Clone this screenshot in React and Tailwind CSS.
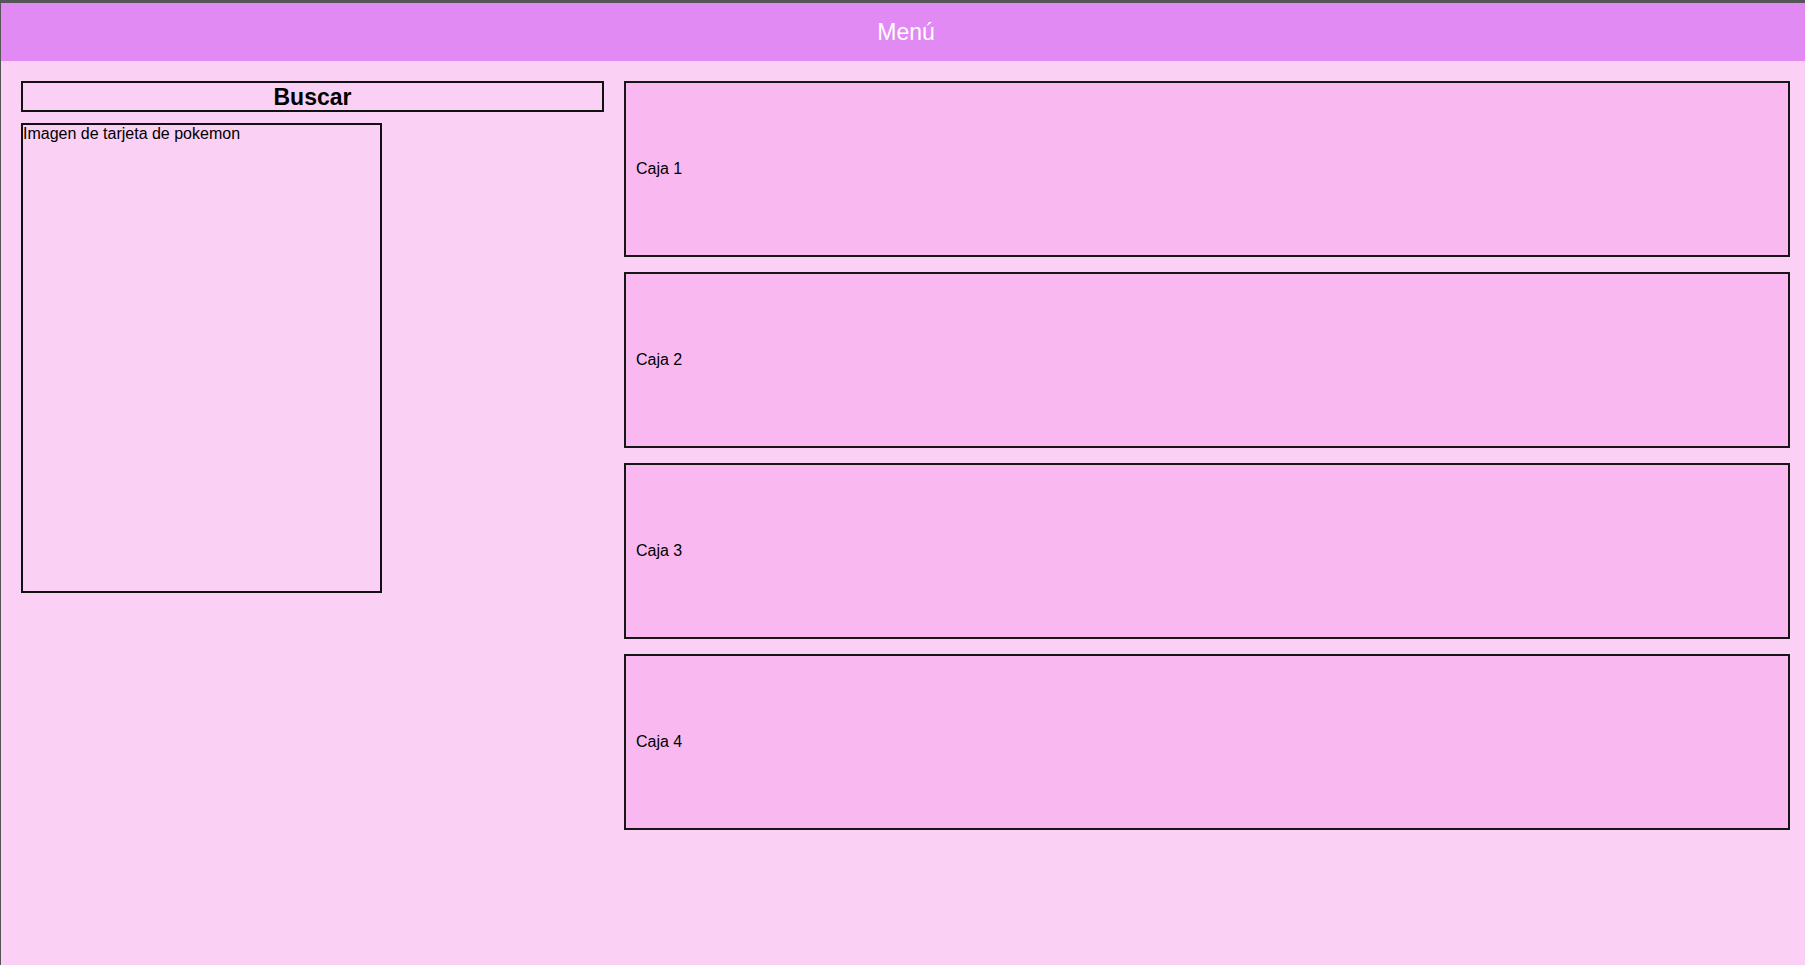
import React from "react";

const cajas = ["Caja 1", "Caja 2", "Caja 3", "Caja 4"];

function App() {
  return (
    <div
      className="min-h-screen bg-[#fad1f4] border-t-[3px] border-l border-[#555555] text-black"
      style={{ fontFamily: '"Liberation Sans", Arial, sans-serif' }}
    >
      <header className="h-[58px] bg-[#e28af4] flex items-center justify-center pl-[6px]">
        <h1 className="text-white text-[23px] font-normal">Menú</h1>
      </header>

      <main className="grid grid-cols-[583px_1fr] gap-5 pl-5 pr-[15px] pt-5">
        <section className="flex flex-col gap-[11px]">
          <div className="h-[31px] border-2 border-[#111111] flex items-center justify-center pt-[1px]">
            <h2 className="text-[23px] font-bold leading-none">Buscar</h2>
          </div>
          <div className="w-[361px] h-[470px] border-2 border-[#111111] text-base leading-[18px]">
            Imagen de tarjeta de pokemon
          </div>
        </section>

        <section className="flex flex-col gap-[15px]">
          {cajas.map((caja) => (
            <div
              key={caja}
              className="h-[176px] border-2 border-[#161616] bg-[#f9b9f0] flex items-center pl-[10px] text-base"
            >
              {caja}
            </div>
          ))}
        </section>
      </main>
    </div>
  );
}

export default App;
